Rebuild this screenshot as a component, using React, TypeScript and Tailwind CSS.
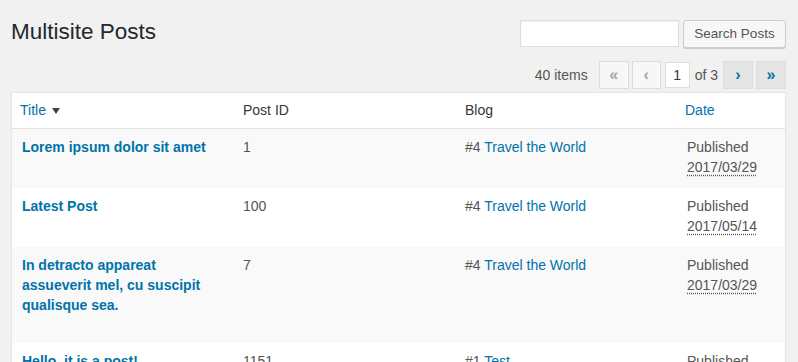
import React from "react";

type Row = {
  title: string;
  id: string;
  blogNum: string;
  blog: string;
  date: string;
  h: string;
  alt: boolean;
};

const rows: Row[] = [
  { title: "Lorem ipsum dolor sit amet", id: "1", blogNum: "#4", blog: "Travel the World", date: "2017/03/29", h: "h-[59px]", alt: true },
  { title: "Latest Post", id: "100", blogNum: "#4", blog: "Travel the World", date: "2017/05/14", h: "h-[59px]", alt: false },
  { title: "In detracto appareat assueverit mel, cu suscipit qualisque sea.", id: "7", blogNum: "#4", blog: "Travel the World", date: "2017/03/29", h: "h-[96px]", alt: true },
  { title: "Hello, it is a post!", id: "1151", blogNum: "#1", blog: "Test", date: "2017/03/29", h: "h-[59px]", alt: false },
];

export default function App() {
  return (
    <div className="w-[798px] h-[362px] overflow-hidden bg-[#f1f1f1] font-['Liberation_Sans',Arial,sans-serif] text-[14px] text-[#555]">
      <div className="pl-[11px] pr-[12px]">
        <div className="flex justify-between items-start pt-[20px]">
          <h1 className="text-[22.5px] leading-[29px] mt-[-3px] text-[#23282d] font-normal">Multisite Posts</h1>
          <div className="flex gap-[4px] items-start">
            <input
              className="w-[159px] h-[27px] bg-white border border-[#ddd] shadow-[inset_0_1px_2px_rgba(0,0,0,0.07)] outline-none"
              aria-label="Search"
            />
            <button className="w-[103px] h-[28px] text-[13.5px] leading-[26px] text-[#555] bg-[#f7f7f7] border border-[#ccc] rounded-[3px] shadow-[0_1px_0_#ccc]">
              Search Posts
            </button>
          </div>
        </div>

        <div className="flex justify-end items-center mt-[13px] h-[28px]">
          <span className="mr-[11px] text-[#555]">40 items</span>
          <span className="w-[30px] h-[28px] flex items-center justify-center border border-[#ddd] bg-[#f7f7f7] text-[#a0a5aa] text-[16px] font-bold leading-none mr-[3px]">«</span>
          <span className="w-[29px] h-[28px] flex items-center justify-center border border-[#ddd] bg-[#f7f7f7] text-[#a0a5aa] text-[16px] font-bold leading-none mr-[4px]">‹</span>
          <span className="w-[25px] h-[26px] flex items-center justify-center border border-[#ddd] bg-white text-[#32373c] mr-[5px]">1</span>
          <span className="mr-[5px] text-[#555]">of 3</span>
          <span className="w-[30px] h-[28px] flex items-center justify-center border border-[#ddd] bg-[#e5e5e5] text-[#0073aa] text-[16px] font-bold leading-none mr-[3px]">›</span>
          <span className="w-[30px] h-[28px] flex items-center justify-center border border-[#ddd] bg-[#e5e5e5] text-[#0073aa] text-[16px] font-bold leading-none">»</span>
        </div>

        <div className="mt-[3px] border border-[#e5e5e5] bg-white shadow-[0_1px_1px_rgba(0,0,0,0.04)]">
          <div className="grid grid-cols-[221px_222px_222px_1fr] h-[36px] items-center border-b border-[#e1e1e1] bg-white">
            <div className="pl-[8px] flex items-center text-[#0073aa]">
              Title
              <svg className="ml-[6px]" width="8" height="6" viewBox="0 0 8 6">
                <path d="M0 0 L8 0 L4 6 Z" fill="#444" />
              </svg>
            </div>
            <div className="pl-[10px] text-[#32373c]">Post ID</div>
            <div className="pl-[10px] text-[#32373c]">Blog</div>
            <div className="pl-[8px] text-[#0073aa]">Date</div>
          </div>
          {rows.map((r, i) => (
            <div
              key={i}
              className={`grid grid-cols-[221px_222px_222px_1fr] ${r.h} ${r.alt ? "bg-[#f9f9f9]" : "bg-white"} leading-[20px]`}
            >
              <div className="pl-[10px] pr-[10px] pt-[8px] font-bold text-[#0073aa]">{r.title}</div>
              <div className="pl-[10px] pt-[8px] text-[#555]">{r.id}</div>
              <div className="pl-[10px] pt-[8px] text-[#555]">
                {r.blogNum} <span className="text-[#0073aa]">{r.blog}</span>
              </div>
              <div className="pl-[10px] pt-[8px] text-[#555]">
                <div>Published</div>
                <div>
                  <span className="underline decoration-dotted underline-offset-[3px] decoration-[#555]">{r.date}</span>
                </div>
              </div>
            </div>
          ))}
        </div>
      </div>
    </div>
  );
}
